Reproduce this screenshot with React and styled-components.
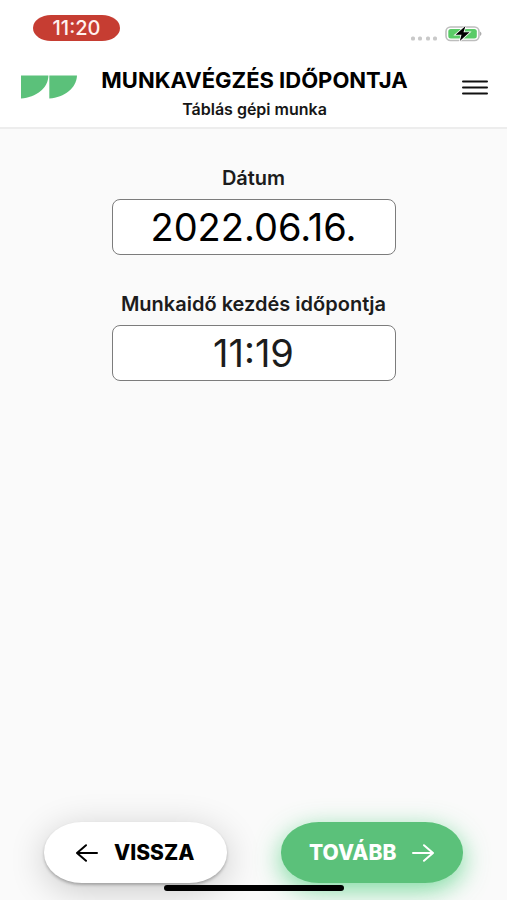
import React, { useState } from "react";
import styled, { createGlobalStyle } from "styled-components";

const GlobalStyle = createGlobalStyle`
  *, *::before, *::after { box-sizing: border-box; }
  body { margin: 0; background: #fafafa; }
  body, button, input { font-family: Inter, "Open Sans", sans-serif; }
  h1, p { margin: 0; }
`;

const Screen = styled.div`
  display: flex;
  flex-direction: column;
  min-height: 100vh;
  background: #fafafa;
  color: #000;
  overflow: hidden;
`;

const Top = styled.header`
  background: #fff;
  border-bottom: 2px solid #ededed;
`;

const StatusBar = styled.div`
  display: flex;
  justify-content: space-between;
  padding: 15px 25px 0 33px;
`;

const Clock = styled.time`
  width: 87px;
  height: 26px;
  border-radius: 18px / 13px;
  background: #c63d32;
  color: #fff0ee;
  font-size: 20px;
  font-weight: 500;
  line-height: 26px;
  text-align: center;
`;

const StatusIcons = styled.div`
  display: flex;
  gap: 7px;
  padding-top: 10px;
`;

const TitleBar = styled.div`
  display: grid;
  grid-template-columns: 57px 1fr 57px;
  align-items: start;
  padding: 22px 19px 4px 21px;
`;

const Logo = styled.svg`
  display: block;
  margin-top: 10px;
`;

const Heading = styled.div`
  text-align: center;
  white-space: nowrap;
`;

const Title = styled.h1`
  font-size: 22px;
  font-weight: 700;
  line-height: 30px;
`;

const Subtitle = styled.p`
  color: #161616;
  font-size: 16px;
  font-weight: 600;
  line-height: 28px;
`;

const MenuButton = styled.button`
  justify-self: end;
  margin-top: 14px;
  padding: 0;
  border: 0;
  background: none;
  cursor: pointer;
  svg { display: block; }
`;

const Form = styled.form`
  flex: 1;
  display: flex;
  flex-direction: column;
  align-items: center;
  gap: 34px;
  padding: 34px 20px;
`;

const Field = styled.div`
  display: flex;
  flex-direction: column;
  align-items: center;
  gap: 6px;
  width: 100%;
`;

const Label = styled.label`
  color: #1c1c1c;
  font-size: 20px;
  font-weight: 600;
  line-height: 30px;
  white-space: nowrap;
`;

const Input = styled.input`
  width: 284px;
  max-width: 100%;
  height: 56px;
  padding: 0;
  border: 1px solid #7c7c7c;
  border-radius: 8px;
  background: #fff;
  color: ${(p) => p.$ink};
  font-size: 38px;
  text-align: center;
`;

const Footer = styled.footer`
  display: flex;
  flex-direction: column;
  align-items: center;
  gap: 2px;
  padding: 0 44px 9px;
`;

const Actions = styled.div`
  display: flex;
  gap: 54px;
  width: 100%;
`;

const PillButton = styled.button`
  flex: 1;
  display: flex;
  align-items: center;
  justify-content: center;
  gap: 16px;
  height: 61px;
  padding: 0;
  border: 0;
  border-radius: 38px / 30px;
  background: ${(p) => (p.$primary ? "#5bc17a" : "#fff")};
  color: ${(p) => (p.$primary ? "#fff" : "#000")};
  box-shadow: ${(p) =>
    p.$primary
      ? "0 7px 26px rgba(70, 205, 120, 0.7)"
      : "0 2px 3px rgba(0, 0, 0, 0.25), 0 7px 36px rgba(0, 0, 0, 0.2)"};
  font-size: 21px;
  font-weight: 800;
  cursor: pointer;
`;

const HomeIndicator = styled.div`
  position: relative;
  width: 180px;
  height: 6px;
  border-radius: 3px;
  background: #000;
`;

const SignalDots = () => (
  <svg width="28" height="18" viewBox="0 0 28 18" fill="#c9c9c9" aria-hidden="true">
    {[0, 7, 15, 22].map((x) => (
      <rect key={x} x={x + 1} y="11.5" width="4" height="4" rx="1.5" />
    ))}
  </svg>
);

const Battery = () => (
  <svg width="37" height="17" viewBox="0 0 37 17" aria-hidden="true">
    <rect x="1" y="2" width="33" height="13.5" rx="4.5" fill="#fff" stroke="#bdbdbd" strokeWidth="1.6" />
    <rect x="3.3" y="4" width="28.5" height="9.5" rx="2.5" fill="#5acb67" />
    <path d="M35.3 6.5c1.4.8 1.4 3.6 0 4.4z" fill="#888" />
    <path d="M20.5 1 10.5 9.8h6L14.8 16 24.5 7.3h-6z" fill="#000" stroke="#fff" strokeWidth="1.6" paintOrder="stroke" />
  </svg>
);

const BrandMark = () => (
  <Logo width="57" height="24" viewBox="0 0 57 24" fill="#5bc17a" role="img" aria-label="Logo">
    <path d="M0 .5h27.4C27.4 13 15 22.5 0 23.5z" />
    <path d="M28.3.5H56C55.5 13 43.5 22.5 28.3 23.5z" />
  </Logo>
);

const Arrow = ({ right }) => (
  <svg width="22" height="18" viewBox="0 0 22 18" fill="none" stroke="currentColor" strokeWidth="2" strokeLinecap="round" strokeLinejoin="round" aria-hidden="true">
    <path d={right ? "M1 9h20M12 1.2 21 9l-9 7.8" : "M21 9H1M10 1.2 1 9l9 7.8"} />
  </svg>
);

export default function App() {
  const [date, setDate] = useState("2022.06.16.");
  const [time, setTime] = useState("11:19");

  return (
    <Screen>
      <GlobalStyle />
      <Top>
        <StatusBar>
          <Clock>11:20</Clock>
          <StatusIcons>
            <SignalDots />
            <Battery />
          </StatusIcons>
        </StatusBar>
        <TitleBar>
          <BrandMark />
          <Heading>
            <Title>MUNKAVÉGZÉS IDŐPONTJA</Title>
            <Subtitle>Táblás gépi munka</Subtitle>
          </Heading>
          <MenuButton type="button" aria-label="Menü">
            <svg width="26" height="17" viewBox="0 0 26 17" stroke="#111" strokeWidth="2" strokeLinecap="round" aria-hidden="true">
              <path d="M1 2.5h24M1 8.5h24M1 14.5h24" />
            </svg>
          </MenuButton>
        </TitleBar>
      </Top>
      <Form id="work-time" onSubmit={(e) => e.preventDefault()}>
        <Field>
          <Label htmlFor="date">Dátum</Label>
          <Input id="date" $ink="#000" value={date} onChange={(e) => setDate(e.target.value)} />
        </Field>
        <Field>
          <Label htmlFor="time">Munkaidő kezdés időpontja</Label>
          <Input id="time" $ink="#1c1c1c" value={time} onChange={(e) => setTime(e.target.value)} />
        </Field>
      </Form>
      <Footer>
        <Actions>
          <PillButton type="button">
            <Arrow />
            VISSZA
          </PillButton>
          <PillButton type="submit" form="work-time" $primary>
            TOVÁBB
            <Arrow right />
          </PillButton>
        </Actions>
        <HomeIndicator />
      </Footer>
    </Screen>
  );
}
